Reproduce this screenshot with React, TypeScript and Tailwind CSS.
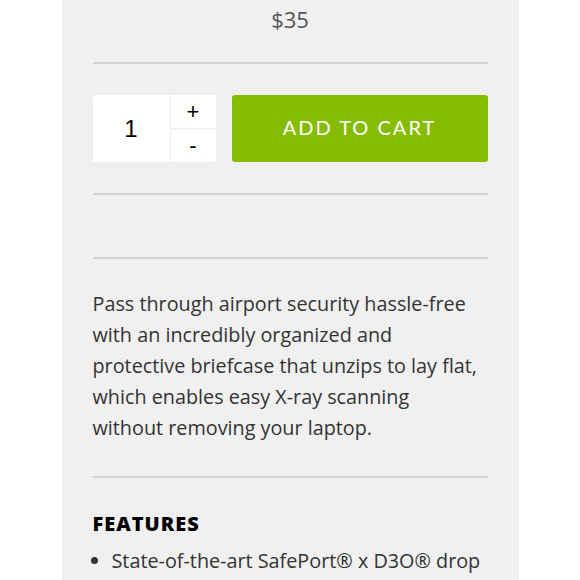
export default function App() {
  return (
    <div className="w-[580px] h-[580px] overflow-hidden bg-white flex justify-center">
      <div
        className="w-[457px] bg-[#f0f0f0] px-[31px] text-[#333]"
        style={{ fontFamily: "'Open Sans', Lato, sans-serif" }}
      >
        <div className="h-[62px] pt-[4px] text-center text-[22px] text-[#555] leading-[30px]">
          $35
        </div>
        <hr className="border-0 h-[2px] bg-[#d4d4d4]" />

        <div className="flex items-stretch gap-4 mt-[31px] h-[67px]">
          <div className="flex w-[123px] bg-white rounded-[2px] overflow-hidden">
            <div className="w-[77px] flex items-center justify-center text-[24px] text-black" style={{ fontFamily: "'Liberation Sans', Arial, sans-serif" }}>
              1
            </div>
            <div className="flex-1 flex flex-col border-l border-[#eee]" style={{ fontFamily: "'Liberation Sans', Arial, sans-serif" }}>
              <button className="flex-1 flex items-center justify-center text-[22px] text-black border-b border-[#eee]">
                +
              </button>
              <button className="flex-1 flex items-center justify-center text-[22px] text-black">
                -
              </button>
            </div>
          </div>
          <button className="flex-1 bg-[#86bc00] rounded-[3px] text-white text-[20px] tracking-[2px] pb-[4px]" style={{ fontFamily: "Lato, sans-serif" }}>
            ADD TO CART
          </button>
        </div>

        <hr className="border-0 h-[2px] bg-[#d4d4d4] mt-[31px]" />
        <hr className="border-0 h-[2px] bg-[#d4d4d4] mt-[62px]" />

        <p className="mt-[29px] text-[19.8px] leading-[31px] whitespace-nowrap">
          Pass through airport security hassle-free
          <br />
          with an incredibly organized and
          <br />
          protective briefcase that unzips to lay flat,
          <br />
          which enables easy X-ray scanning
          <br />
          without removing your laptop.
        </p>

        <hr className="border-0 h-[2px] bg-[#d4d4d4] mt-[33px]" />

        <h3 className="mt-[33px] text-[20px] font-extrabold tracking-[1px] text-black leading-[26px]">
          FEATURES
        </h3>
        <ul className="list-disc pl-[19px] mt-[8px] text-[19.8px] leading-[31px]">
          <li>State-of-the-art SafePort® x D3O® drop protection</li>
        </ul>
      </div>
    </div>
  );
}
